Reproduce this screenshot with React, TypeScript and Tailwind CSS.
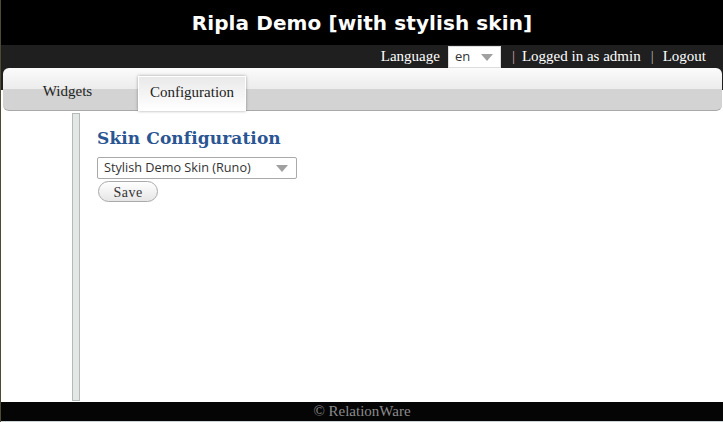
const SERIF = "font-['Liberation_Serif',serif]";

function Triangle({ className = "" }: { className?: string }) {
  return (
    <svg width="12" height="7" viewBox="0 0 12 7" className={className} aria-hidden="true">
      <path d="M0 0h12L6 7z" fill="#a0a0a0" />
    </svg>
  );
}

export default function App() {
  return (
    <div className="h-[422px] w-[723px] flex flex-col bg-white border-l border-[#4d4a36] overflow-hidden">
      {/* ── Title ── */}
      <header className="h-[45px] bg-black flex items-center justify-center">
        <h1 className="text-white text-[20px] font-bold font-['DejaVu_Sans',sans-serif] tracking-[0.1px]">
          Ripla Demo [with stylish skin]
        </h1>
      </header>

      {/* ── User bar ── */}
      <div className={`h-[23px] bg-[#1f1f1f] flex items-center justify-end pr-[17px] text-white text-[15px] ${SERIF}`}>
        <span className="mr-[8px]">Language</span>
        <div className="h-[22px] w-[53px] mt-[1px] self-start bg-white border border-[#ddd] flex items-center justify-between pl-[6px] pr-[7px]">
          <span className="text-[#333] text-[13px] font-['Open_Sans',sans-serif]">en</span>
          <Triangle />
        </div>
        <span className="text-[#d8a0a0] ml-[11px] mr-[7px]">|</span>
        <span>Logged in as admin</span>
        <span className="text-[#b0b0b0] ml-[10px] mr-[9px]">|</span>
        <span>Logout</span>
      </div>

      {/* ── Tabs ── */}
      <div className="h-[43px] bg-linear-to-b from-[#1f1f1f] from-50% to-white to-50% pl-[2px] pr-px">
        <div className="relative h-full rounded-[6px] border-b border-[#a8a8a8] bg-linear-to-b from-[#fbfbfb] from-0% via-[#ececec] via-50% to-[#d3d3d3] to-50% flex items-end">
          <div className={`w-[135px] h-[35px] flex items-center justify-center pb-[3px] text-[15px] text-[#222] ${SERIF} pr-[6px]`}>
            Widgets
          </div>
          <div
            className={`w-[108px] h-[35px] -mb-px border border-white bg-linear-to-b from-[#e9e9e9] to-white shadow-[0_0_3px_rgba(0,0,0,0.35)] flex items-center justify-center pb-[3px] text-[15px] text-[#222] ${SERIF}`}
          >
            Configuration
          </div>
        </div>
      </div>

      {/* ── Content ── */}
      <main className="flex-1 flex">
        <div className="w-[71px]" />
        <div className="w-[8px] mt-[2px] mb-px bg-[#e3e7e5] border border-[#b3bab8]" />
        <div className="pl-[17px] pt-[15px]">
          <h2 className="text-[#2a5593] text-[17px] font-bold font-['DejaVu_Serif',serif] leading-[24px] tracking-[0.1px]">
            Skin Configuration
          </h2>
          <div className="mt-[7px] w-[200px] h-[22px] border border-[#aaa] rounded-[2px] bg-white flex items-center justify-between pl-[6px] pr-[8px]">
            <span className="text-[#333] text-[12.7px] font-['Open_Sans',sans-serif]">Stylish Demo Skin (Runo)</span>
            <Triangle />
          </div>
          <button
            className={`mt-[1px] ml-px w-[60px] h-[21px] rounded-full border border-[#aaa] bg-linear-to-b from-white to-[#e6e6e6] text-[14px] text-[#333] ${SERIF} tracking-[0.5px]`}
          >
            Save
          </button>
        </div>
      </main>

      {/* ── Footer ── */}
      <footer className={`h-[20px] bg-[#050505] border-b border-[#c8d4d8] flex items-center justify-center text-[#8a8a8a] text-[15px] ${SERIF}`}>
        © RelationWare
      </footer>
    </div>
  );
}
